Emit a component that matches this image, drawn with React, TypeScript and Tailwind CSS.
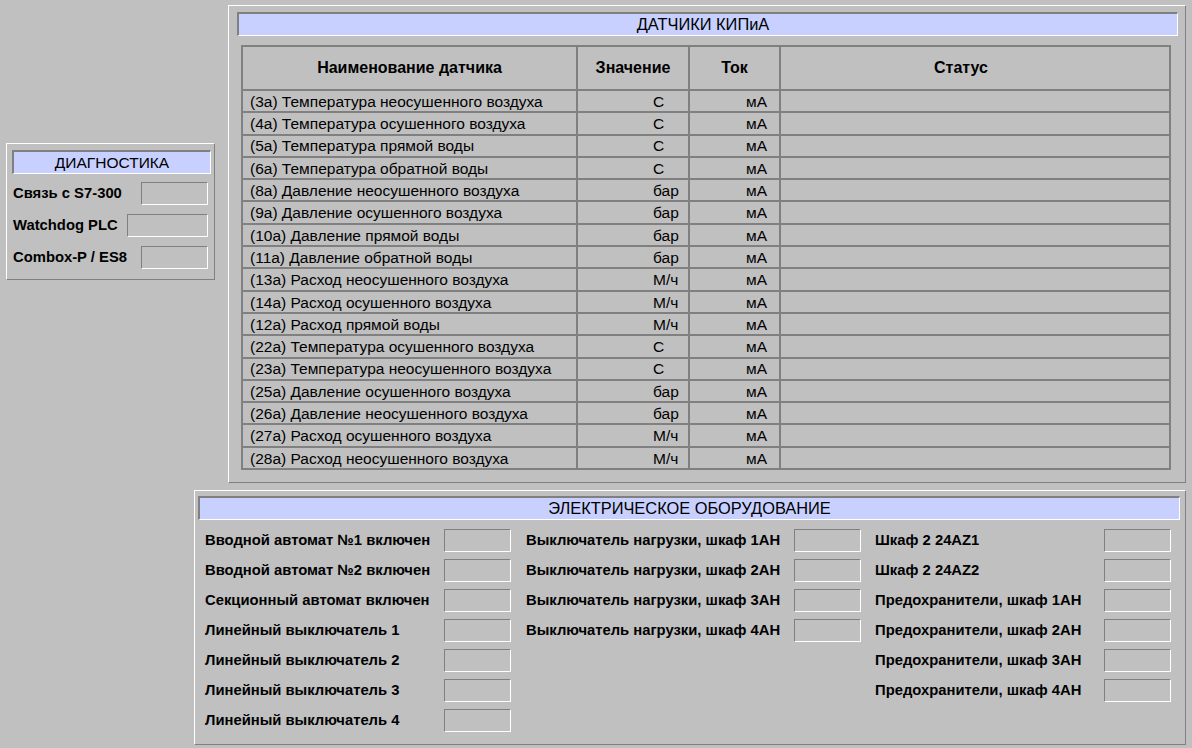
import React from "react";

const font = { fontFamily: '"Liberation Sans", Arial, sans-serif' };

type Sensor = { name: string; unit: string };

const sensors: Sensor[] = [
  { name: "(3а) Температура неосушенного воздуха", unit: "С" },
  { name: "(4а) Температура осушенного воздуха", unit: "С" },
  { name: "(5а) Температура прямой воды", unit: "С" },
  { name: "(6а) Температура обратной воды", unit: "С" },
  { name: "(8а) Давление неосушенного воздуха", unit: "бар" },
  { name: "(9а) Давление осушенного воздуха", unit: "бар" },
  { name: "(10а) Давление прямой воды", unit: "бар" },
  { name: "(11а) Давление обратной воды", unit: "бар" },
  { name: "(13а) Расход неосушенного воздуха", unit: "М/ч" },
  { name: "(14а) Расход осушенного воздуха", unit: "М/ч" },
  { name: "(12а) Расход прямой воды", unit: "М/ч" },
  { name: "(22а) Температура осушенного воздуха", unit: "С" },
  { name: "(23а) Температура неосушенного воздуха", unit: "С" },
  { name: "(25а) Давление осушенного воздуха", unit: "бар" },
  { name: "(26а) Давление неосушенного воздуха", unit: "бар" },
  { name: "(27а) Расход осушенного воздуха", unit: "М/ч" },
  { name: "(28а) Расход неосушенного воздуха", unit: "М/ч" },
];

const col1 = [
  "Вводной автомат №1 включен",
  "Вводной автомат №2 включен",
  "Секционный автомат включен",
  "Линейный выключатель 1",
  "Линейный выключатель 2",
  "Линейный выключатель 3",
  "Линейный выключатель 4",
];

const col2 = [
  "Выключатель нагрузки, шкаф 1АН",
  "Выключатель нагрузки, шкаф 2АН",
  "Выключатель нагрузки, шкаф 3АН",
  "Выключатель нагрузки, шкаф 4АН",
];

const col3 = [
  "Шкаф 2 24AZ1",
  "Шкаф 2 24AZ2",
  "Предохранители, шкаф 1АН",
  "Предохранители, шкаф 2АН",
  "Предохранители, шкаф 3АН",
  "Предохранители, шкаф 4АН",
];

// sunken indicator box
function Lamp({ wide }: { wide?: boolean }) {
  return (
    <div
      className={`h-[23px] shrink-0 ${wide ? "w-[81px]" : "w-[67px]"} border border-t-[#808080] border-l-[#808080] border-b-white border-r-white bg-[#c0c0c0]`}
    />
  );
}

function TitleBar({ text, className }: { text: string; className: string }) {
  return (
    <div
      className={`h-[24px] flex items-center justify-center bg-[#c8d0ff] border-t-2 border-l-2 border-b border-r border-t-[#808080] border-l-[#808080] border-b-white border-r-white leading-none text-black ${className}`}
    >
      {text}
    </div>
  );
}

function LabelRow({ label, wide }: { label: string; wide?: boolean }) {
  return (
    <div className="flex items-center justify-between h-[23px]">
      <span className="text-[14.8px] leading-none font-bold text-black whitespace-nowrap">{label}</span>
      <Lamp wide={wide} />
    </div>
  );
}

export default function App() {
  return (
    <div className="w-[1192px] h-[748px] bg-[#c0c0c0] overflow-hidden" style={font}>
      <div className="flex items-start pt-[5px]">
        {/* Diagnostics */}
        <div className="ml-[6px] mt-[138px] w-[209px] h-[137px] border border-t-white border-l-white border-b-[#808080] border-r-[#808080]">
          <TitleBar text="ДИАГНОСТИКА" className="ml-[5px] mt-[6px] w-[199px] text-[15.5px]" />
          <div className="ml-[6px] mr-[6px] mt-[8px] flex flex-col gap-[9px]">
            <LabelRow label="Связь с S7-300" />
            <LabelRow label="Watchdog PLC" wide />
            <LabelRow label="Combox-P / ES8" />
          </div>
        </div>

        {/* Sensors */}
        <div className="ml-[13px] w-[958px] h-[478px] border border-t-white border-l-white border-b-[#808080] border-r-[#808080]">
          <TitleBar text="ДАТЧИКИ КИПиА" className="ml-[8px] mt-[6px] w-[941px] pr-[10px] text-[16.4px]" />
          <div className="ml-[12px] mt-[9px] w-[930px] h-[425px] bg-[#808080] p-[2px] grid grid-cols-[333px_110px_89px_388px] grid-rows-[42px_repeat(17,minmax(0,1fr))] gap-[2px] text-black leading-none">
            <div className="bg-[#c0c0c0] flex items-center justify-center text-[16px] font-bold">Наименование датчика</div>
            <div className="bg-[#c0c0c0] flex items-center justify-center text-[16px] font-bold">Значение</div>
            <div className="bg-[#c0c0c0] flex items-center justify-center text-[16px] font-bold">Ток</div>
            <div className="bg-[#c0c0c0] flex items-center justify-center pr-[28px] text-[16px] font-bold">Статус</div>
            {sensors.map((s) => (
              <React.Fragment key={s.name}>
                <div className="bg-[#c0c0c0] flex items-center pl-[7px] pt-[1px] text-[15.5px] whitespace-nowrap">{s.name}</div>
                <div className="bg-[#c0c0c0] flex items-center pl-[75px] pt-[1px] text-[15.5px]">{s.unit}</div>
                <div className="bg-[#c0c0c0] flex items-center pl-[56px] pt-[1px] text-[15.5px]">мА</div>
                <div className="bg-[#c0c0c0]" />
              </React.Fragment>
            ))}
          </div>
        </div>
      </div>

      {/* Electrical */}
      <div className="ml-[194px] mt-[7px] w-[992px] h-[255px] border border-t-white border-l-white border-b-[#808080] border-r-[#808080]">
        <TitleBar text="ЭЛЕКТРИЧЕСКОЕ ОБОРУДОВАНИЕ" className="ml-[3px] mt-[5px] w-[982px] text-[16.4px]" />
        <div className="flex items-start pl-[10px] mt-[9px]">
          <div className="w-[306px] flex flex-col gap-[7px]">
            {col1.map((l) => (
              <LabelRow key={l} label={l} />
            ))}
          </div>
          <div className="ml-[15px] w-[335px] flex flex-col gap-[7px]">
            {col2.map((l) => (
              <LabelRow key={l} label={l} />
            ))}
          </div>
          <div className="ml-[14px] w-[296px] flex flex-col gap-[7px]">
            {col3.map((l) => (
              <LabelRow key={l} label={l} />
            ))}
          </div>
        </div>
      </div>
    </div>
  );
}
